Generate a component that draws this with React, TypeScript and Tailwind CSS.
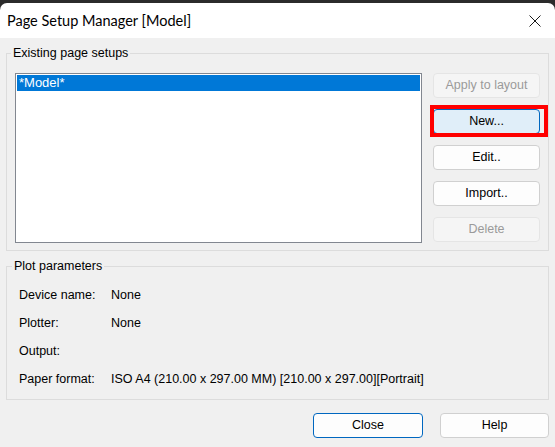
import React from "react";

const btnBase =
  "h-[25px] w-[107px] rounded-[4px] border text-[12.5px] leading-none flex items-center justify-center";

function Btn({ label, disabled }: { label: string; disabled?: boolean }) {
  return (
    <div
      className={
        btnBase +
        (disabled
          ? " bg-[#f5f5f5] border-[#e5e5e5] text-[#9a9a9a]"
          : " bg-[#fdfdfd] border-[#d0d0d0] text-black")
      }
    >
      {label}
    </div>
  );
}

export default function App() {
  return (
    <div
      className="w-[555px] h-[447px] bg-[#2b2b2b] overflow-hidden"
      style={{ fontFamily: '"Liberation Sans", Arial, sans-serif' }}
    >
      <div className="mt-[3px] h-[444px] rounded-t-[7px] bg-white flex flex-col overflow-hidden">
        {/* Title bar */}
        <div className="h-[35px] flex items-center justify-between pl-[7px] pr-[14px]">
          <span
            className="text-[14.5px] text-black"
            style={{ fontFamily: 'Lato, "Noto Sans", sans-serif' }}
          >
            Page Setup Manager [Model]
          </span>
          <svg width="12" height="12" viewBox="0 0 12 12" className="block">
            <path d="M0.5 0.5 L11.5 11.5 M11.5 0.5 L0.5 11.5" stroke="#1a1a1a" strokeWidth="1" />
          </svg>
        </div>

        {/* Body */}
        <div className="flex-1 bg-[#f0f0f0] px-[6px] pt-[8px] flex flex-col">
          <fieldset className="border border-[#dcdcdc] px-[8px] pb-[7px] pt-[12px] m-0 min-w-0">
            <legend className="ml-[-4px] px-[2px] text-[12.5px] leading-[15px] text-black">
              Existing page setups
            </legend>
            <div className="flex gap-[11px]">
              <div className="w-[408px] h-[170px] bg-white border border-[#828790] p-[1px]">
                <div className="h-[16px] bg-[#0078d7] text-white text-[13px] leading-[16px] pl-[2px]">
                  *Model*
                </div>
              </div>
              <div className="flex flex-col gap-[11px]">
                <Btn label="Apply to layout" disabled />
                <div className="relative">
                  <div className={btnBase + " bg-[#e0eef9] border-[#0067c0] text-black"}>New...</div>
                  <div className="absolute left-[-3px] top-[-4px] right-[-8px] bottom-[-3px] border-[4px] border-[#ff0000]" />
                </div>
                <Btn label="Edit.." />
                <Btn label="Import.." />
                <Btn label="Delete" disabled />
              </div>
            </div>
          </fieldset>

          <fieldset className="mt-[8px] border border-[#dcdcdc] pl-[12px] pr-[8px] pt-[7px] pb-[6px] m-0 min-w-0">
            <legend className="ml-[-7px] px-[2px] text-[12.5px] leading-[15px] text-black">
              Plot parameters
            </legend>
            {[
              ["Device name:", "None"],
              ["Plotter:", "None"],
              ["Output:", ""],
              ["Paper format:", "ISO A4 (210.00 x 297.00 MM) [210.00 x 297.00][Portrait]"],
            ].map(([k, v]) => (
              <div key={k} className="h-[28px] flex items-center text-[12.5px] text-black">
                <span className="w-[92px] shrink-0">{k}</span>
                <span>{v}</span>
              </div>
            ))}
          </fieldset>

          <div className="mt-[13px] flex justify-end gap-[17px]">
            <div className="h-[25px] w-[110px] rounded-[4px] border border-[#0067c0] bg-[#fdfdfd] text-[12.5px] flex items-center justify-center text-black">
              Close
            </div>
            <div className="h-[25px] w-[109px] rounded-[4px] border border-[#d0d0d0] bg-[#fdfdfd] text-[12.5px] flex items-center justify-center text-black">
              Help
            </div>
          </div>
        </div>
      </div>
    </div>
  );
}
